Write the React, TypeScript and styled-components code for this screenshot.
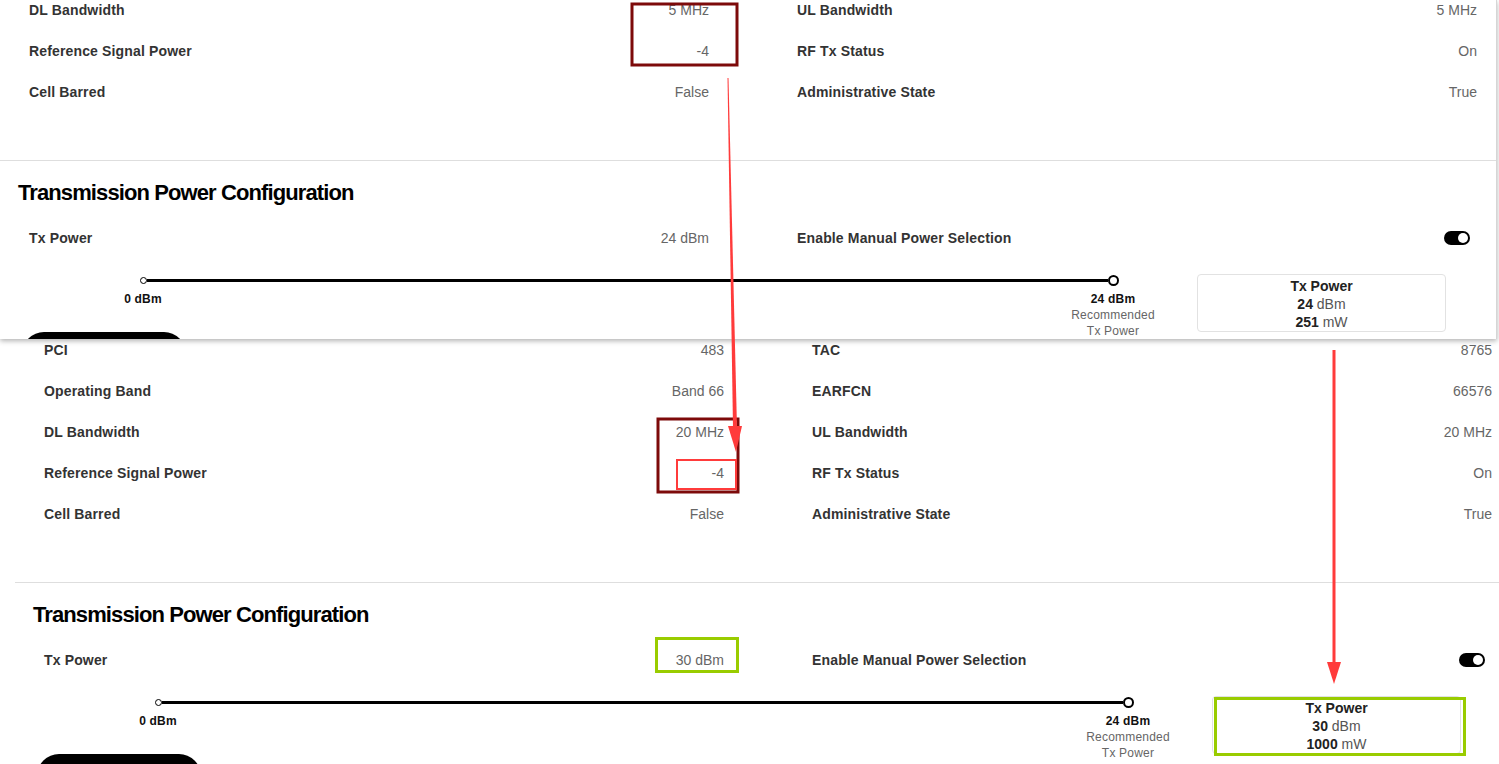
import React from "react";
import styled, { createGlobalStyle } from "styled-components";

const GlobalStyle = createGlobalStyle`
  html, body {
    margin: 0;
    padding: 0;
    background: #fff;
  }
  body {
    font-family: "Liberation Sans", Arial, sans-serif;
    color: #333;
  }
`;

const Page = styled.div`
  position: relative;
  width: 1499px;
  height: 764px;
  overflow: hidden;
  background: #fff;
`;

const TopShot = styled.div`
  position: relative;
  z-index: 1;
  width: 1496px;
  height: 339px;
  overflow: hidden;
  background: #fff;
  border-right: 1px solid #d6d6d6;
  box-shadow: 0 2px 5px rgba(0, 0, 0, 0.3);
`;

const BottomShot = styled.div`
  margin-left: 15px;
  padding-top: 1px;
  width: 1484px;
  height: 424px;
  overflow: hidden;
  background: #fff;
`;

const Section = styled.div`
  padding-left: 29px;
`;

const InfoGrid = styled.div`
  display: grid;
  grid-template-columns: 680px 680px;
  grid-auto-rows: 41px;
  column-gap: 88px;
`;

const Cell = styled.div`
  display: flex;
  justify-content: space-between;
  align-items: flex-start;
  line-height: 20px;
  font-size: 14px;
`;

const Label = styled.span`
  font-weight: 700;
  color: #333;
  letter-spacing: 0.15px;
`;

const Value = styled.span`
  color: #666;
`;

const Divider = styled.div`
  height: 1px;
  background: #dedede;
  margin-top: 37px;
`;

const Title = styled.h2`
  margin: 18px 0 0 -11px;
  font-size: 22px;
  line-height: 28px;
  font-weight: 700;
  letter-spacing: -0.9px;
  color: #000;
`;

const TxRow = styled(InfoGrid)`
  margin-top: 21px;
  grid-auto-rows: 20px;
`;

const Toggle = styled.div`
  width: 26px;
  height: 14px;
  margin: 3px 7px 0 0;
  border-radius: 7px;
  background: #000;
  display: flex;
  justify-content: flex-end;
  align-items: center;
  padding: 0 2px;
  box-sizing: border-box;
`;

const Knob = styled.div`
  width: 10px;
  height: 10px;
  border-radius: 50%;
  background: #fff;
`;

const SliderRow = styled.div`
  display: flex;
  align-items: flex-start;
  height: 57px;
  margin-top: 27px;
`;

const Slider = styled.div`
  width: 979px;
  margin-left: 110.5px;
`;

const Track = styled.div`
  display: flex;
  align-items: center;
  height: 11px;
`;

const Dot = styled.div<{ $size: number; $border: number }>`
  width: ${p => p.$size}px;
  height: ${p => p.$size}px;
  border: ${p => p.$border}px solid #000;
  border-radius: 50%;
  background: #fff;
  box-sizing: border-box;
  flex-shrink: 0;
`;

const Line = styled.div`
  flex: 1;
  height: 3px;
  background: #000;
`;

const Ticks = styled.div`
  display: flex;
  justify-content: space-between;
  margin-top: 4.5px;
  margin-left: -46.5px;
  margin-right: -44.5px;
`;

const Tick = styled.div`
  width: 100px;
  text-align: center;
  font-size: 12px;
  line-height: 16px;
  color: #666;
  letter-spacing: 0.2px;

  b {
    color: #111;
  }
`;

const PowerBox = styled.div`
  width: 249px;
  height: 58px;
  margin-left: 78.5px;
  margin-top: -1px;
  padding-top: 2px;
  box-sizing: border-box;
  border: 1px solid #e2e2e2;
  border-radius: 4px;
  text-align: center;
  font-size: 14px;
  line-height: 18px;
  color: #555;

  b {
    color: #222;
  }
`;

const BlackButton = styled.div`
  width: 164px;
  height: 44px;
  margin-left: -7px;
  border-radius: 22px;
  background: #000;
`;

const Marks = styled.svg`
  position: absolute;
  inset: 0;
  z-index: 2;
  pointer-events: none;
`;

type Row = [string, string, string, string];

const CellPanel = ({
  rows,
  txPower,
  dbm,
  mw,
}: {
  rows: Row[];
  txPower: string;
  dbm: string;
  mw: string;
}) => (
  <>
    <Section>
      <InfoGrid>
        {rows.map(([l1, v1, l2, v2]) => (
          <React.Fragment key={l1}>
            <Cell>
              <Label>{l1}</Label>
              <Value>{v1}</Value>
            </Cell>
            <Cell>
              <Label>{l2}</Label>
              <Value>{v2}</Value>
            </Cell>
          </React.Fragment>
        ))}
      </InfoGrid>
    </Section>
    <Divider />
    <Section>
      <Title>Transmission Power Configuration</Title>
      <TxRow>
        <Cell>
          <Label>Tx Power</Label>
          <Value>{txPower}</Value>
        </Cell>
        <Cell>
          <Label>Enable Manual Power Selection</Label>
          <Toggle>
            <Knob />
          </Toggle>
        </Cell>
      </TxRow>
      <SliderRow>
        <Slider>
          <Track>
            <Dot $size={7} $border={1.5} />
            <Line />
            <Dot $size={11} $border={2} />
          </Track>
          <Ticks>
            <Tick>
              <b>0 dBm</b>
            </Tick>
            <Tick>
              <b>24 dBm</b>
              <br />
              Recommended
              <br />
              Tx Power
            </Tick>
          </Ticks>
        </Slider>
        <PowerBox>
          <b>Tx Power</b>
          <br />
          <b>{dbm}</b> dBm
          <br />
          <b>{mw}</b> mW
        </PowerBox>
      </SliderRow>
      <BlackButton />
    </Section>
  </>
);

const RED = "#ff3b3b";
const DARK_RED = "#7d0a0a";
const GREEN = "#99cc00";

const App = () => (
  <Page>
    <GlobalStyle />
    <TopShot>
      <CellPanel
        rows={[
          ["DL Bandwidth", "5 MHz", "UL Bandwidth", "5 MHz"],
          ["Reference Signal Power", "-4", "RF Tx Status", "On"],
          ["Cell Barred", "False", "Administrative State", "True"],
        ]}
        txPower="24 dBm"
        dbm="24"
        mw="251"
      />
    </TopShot>
    <BottomShot>
      <CellPanel
        rows={[
          ["PCI", "483", "TAC", "8765"],
          ["Operating Band", "Band 66", "EARFCN", "66576"],
          ["DL Bandwidth", "20 MHz", "UL Bandwidth", "20 MHz"],
          ["Reference Signal Power", "-4", "RF Tx Status", "On"],
          ["Cell Barred", "False", "Administrative State", "True"],
        ]}
        txPower="30 dBm"
        dbm="30"
        mw="1000"
      />
    </BottomShot>
    <Marks width="1499" height="764" viewBox="0 0 1499 764">
      <rect x="632" y="4" width="105" height="61" fill="none" stroke={DARK_RED} strokeWidth="3" />
      <rect x="658" y="419" width="80" height="73" fill="none" stroke={DARK_RED} strokeWidth="3" />
      <rect x="677" y="460" width="59" height="29" fill="none" stroke={RED} strokeWidth="2" />
      <polygon points="727.5,78 728.5,78 737,428 733,428" fill={RED} />
      <polygon points="728,426 742,426 736,452" fill={RED} />
      <line x1="1334" y1="350" x2="1334" y2="664" stroke={RED} strokeWidth="3" />
      <polygon points="1327,662 1341,662 1334,684" fill={RED} />
      <rect x="656.5" y="638.5" width="81" height="33" fill="none" stroke={GREEN} strokeWidth="3" />
      <rect x="1215.5" y="698.5" width="249" height="56" fill="none" stroke={GREEN} strokeWidth="3" />
    </Marks>
  </Page>
);

export default App;
